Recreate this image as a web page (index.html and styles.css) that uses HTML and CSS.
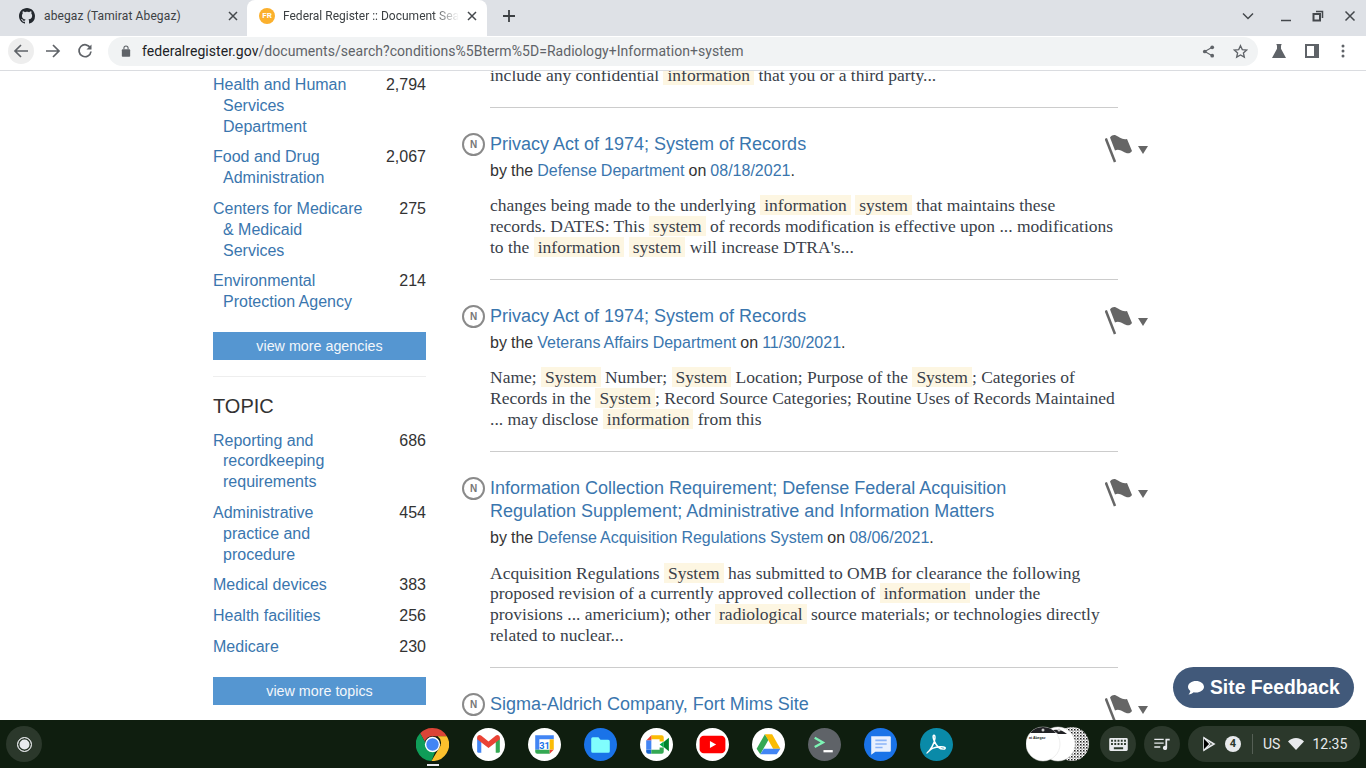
FILE: index.html

```html
<!DOCTYPE html>
<html lang="en">
<head>
    <meta charset="UTF-8">
    <title>Federal Register :: Document Search</title>
    <link rel="stylesheet" href="styles.css">
</head>
<body>

<div class="tabstrip">
    <div class="tab">
        <svg class="favicon" viewBox="0 0 16 16"><path fill="#24292f" d="M8 0C3.58 0 0 3.58 0 8c0 3.54 2.29 6.53 5.47 7.59.4.07.55-.17.55-.38 0-.19-.01-.82-.01-1.49-2.01.37-2.53-.49-2.69-.94-.09-.23-.48-.94-.82-1.13-.28-.15-.68-.52-.01-.53.63-.01 1.08.58 1.23.82.72 1.21 1.87.87 2.33.66.07-.52.28-.87.51-1.07-1.78-.2-3.64-.89-3.64-3.95 0-.87.31-1.59.82-2.15-.08-.2-.36-1.02.08-2.12 0 0 .67-.21 2.2.82.64-.18 1.32-.27 2-.27s1.36.09 2 .27c1.53-1.04 2.2-.82 2.2-.82.44 1.1.16 1.92.08 2.12.51.56.82 1.27.82 2.15 0 3.07-1.87 3.75-3.65 3.95.29.25.54.73.54 1.48 0 1.07-.01 1.93-.01 2.2 0 .21.15.46.55.38A8.01 8.01 0 0 0 16 8c0-4.42-3.58-8-8-8z"/></svg>
        <span class="tab-title tab-plain">abegaz (Tamirat Abegaz)</span>
        <svg class="tab-close" viewBox="0 0 10 10"><path d="M1 1l8 8M9 1l-8 8"/></svg>
    </div>
    <div class="tab tab-active">
        <span class="fr-icon">FR</span>
        <span class="tab-title tab-fade">Federal Register :: Document Search</span>
        <svg class="tab-close" viewBox="0 0 10 10"><path d="M1 1l8 8M9 1l-8 8"/></svg>
    </div>
    <svg class="new-tab" viewBox="0 0 12 12"><path d="M6 0v12M0 6h12"/></svg>
    <div class="window-btns">
        <svg class="win-chevron" viewBox="0 0 12 8"><path d="M1 1.5l5 5 5-5"/></svg>
        <svg class="win-min" viewBox="0 0 12 12"><path d="M1 10.500h10"/></svg>
        <svg class="win-restore" viewBox="0 0 12 12"><path d="M4 1.500h6.500V8"/><path d="M1.500 4h6.500v6.500H1.500z" stroke-width="2"/></svg>
        <svg class="win-close" viewBox="0 0 12 12"><path d="M1.5 1.5l9 9M10.5 1.5l-9 9"/></svg>
    </div>
</div>

<div class="toolbar">
    <div class="nav-btn nav-back">
        <svg viewBox="0 0 16 16"><path d="M15 8H2M8 2L2 8l6 6"/></svg>
    </div>
    <div class="nav-btn">
        <svg viewBox="0 0 16 16"><path d="M1 8h13M8 2l6 6-6 6"/></svg>
    </div>
    <div class="nav-btn">
        <svg viewBox="0 0 16 16"><path d="M13.4 5A6 6 0 1 0 14 8.5"/><path class="solid" d="M14.5 1.5v5h-5z"/></svg>
    </div>
    <div class="omnibox">
        <svg class="lock" viewBox="0 0 12 14"><path d="M2 5h8a1 1 0 0 1 1 1v7a1 1 0 0 1-1 1H2a1 1 0 0 1-1-1V6a1 1 0 0 1 1-1z"/><path d="M3.5 5V3.5a2.5 2.5 0 0 1 5 0V5" fill="none" stroke="#5f6368" stroke-width="1.3"/></svg>
        <span class="url"><span class="url-host">federalregister.gov</span>/documents/search?conditions%5Bterm%5D=Radiology+Information+system</span>
        <svg class="omni-share" viewBox="0 0 14 14"><path d="M11 2.5L3 7l8 4.5" fill="none" stroke="#5f6368" stroke-width="1.2"/><circle cx="11" cy="2.5" r="2"/><circle cx="3" cy="7" r="2"/><circle cx="11" cy="11.5" r="2"/></svg>
        <svg class="omni-star" viewBox="0 0 16 16"><path d="M8 1.8l1.9 4.2 4.6.5-3.4 3 1 4.5L8 11.7 3.9 14l1-4.5-3.4-3 4.6-.5z"/></svg>
    </div>
    <svg class="tool-flask" viewBox="0 0 16 16"><path d="M5.5 1h5v1.2H10v3.6L15 15H1L6 5.800V2.200h-.5z"/></svg>
    <svg class="tool-panel" viewBox="0 0 14 14"><path fill-rule="evenodd" d="M0 0h14v14H0zM2 2v10h7V2z"/></svg>
    <svg class="tool-dots" viewBox="0 0 4 14"><circle cx="2" cy="2" r="1.500"/><circle cx="2" cy="7" r="1.500"/><circle cx="2" cy="12" r="1.500"/></svg>
</div>

<div class="page">
    <aside class="sidebar">
        <ul class="facets">
            <li><a href="#">Health and Human Services Department</a><span>2,794</span></li>
            <li><a href="#">Food and Drug Administration</a><span>2,067</span></li>
            <li><a href="#">Centers for Medicare &amp; Medicaid Services</a><span>275</span></li>
            <li><a href="#">Environmental Protection Agency</a><span>214</span></li>
        </ul>
        <a class="view-more" href="#">view more agencies</a>
        <hr class="facet-rule">
        <h3>TOPIC</h3>
        <ul class="facets">
            <li><a href="#">Reporting and recordkeeping requirements</a><span>686</span></li>
            <li><a href="#">Administrative practice and procedure</a><span>454</span></li>
            <li><a href="#">Medical devices</a><span>383</span></li>
            <li><a href="#">Health facilities</a><span>256</span></li>
            <li><a href="#">Medicare</a><span>230</span></li>
        </ul>
        <a class="view-more" href="#">view more topics</a>
    </aside>

    <main class="results">
        <div class="result result-cut">
            <div class="result-body">
                <p>include any confidential <mark>information</mark> that you or a third party...</p>
            </div>
        </div>

        <div class="result">
            <span class="doc-type">N</span>
            <div class="result-body">
                <h4><a href="#">Privacy Act of 1974; System of Records</a></h4>
                <div class="byline">by the <a href="#">Defense Department</a> on <a href="#">08/18/2021</a>.</div>
                <p>changes being made to the underlying <mark>information</mark> <mark>system</mark> that maintains these<br>records. DATES: This <mark>system</mark> of records modification is effective upon ... modifications<br>to the <mark>information</mark> <mark>system</mark> will increase DTRA's...</p>
            </div>
            <div class="flag-menu">
                <svg viewBox="0 0 28 28"><path class="pole" d="M.8 3.500L10 27"/><path d="M5 2.500C7 0 9-.5 11 .5c3 1.500 6 4.500 11 3.500l5 12c-2 3-5 3-9 .5-3-1.500-5-2.500-8-1z"/></svg>
                <i class="caret"></i>
            </div>
        </div>

        <div class="result">
            <span class="doc-type">N</span>
            <div class="result-body">
                <h4><a href="#">Privacy Act of 1974; System of Records</a></h4>
                <div class="byline">by the <a href="#">Veterans Affairs Department</a> on <a href="#">11/30/2021</a>.</div>
                <p>Name; <mark>System</mark> Number; <mark>System</mark> Location; Purpose of the <mark>System</mark>; Categories of<br>Records in the <mark>System</mark>; Record Source Categories; Routine Uses of Records Maintained<br>... may disclose <mark>information</mark> from this</p>
            </div>
            <div class="flag-menu">
                <svg viewBox="0 0 28 28"><path class="pole" d="M.8 3.500L10 27"/><path d="M5 2.500C7 0 9-.5 11 .5c3 1.500 6 4.500 11 3.500l5 12c-2 3-5 3-9 .5-3-1.500-5-2.500-8-1z"/></svg>
                <i class="caret"></i>
            </div>
        </div>

        <div class="result">
            <span class="doc-type">N</span>
            <div class="result-body">
                <h4><a href="#">Information Collection Requirement; Defense Federal Acquisition Regulation Supplement; Administrative and Information Matters</a></h4>
                <div class="byline">by the <a href="#">Defense Acquisition Regulations System</a> on <a href="#">08/06/2021</a>.</div>
                <p>Acquisition Regulations <mark>System</mark> has submitted to OMB for clearance the following<br>proposed revision of a currently approved collection of <mark>information</mark> under the<br>provisions ... americium); other <mark>radiological</mark> source materials; or technologies directly<br>related to nuclear...</p>
            </div>
            <div class="flag-menu">
                <svg viewBox="0 0 28 28"><path class="pole" d="M.8 3.500L10 27"/><path d="M5 2.500C7 0 9-.5 11 .5c3 1.500 6 4.500 11 3.500l5 12c-2 3-5 3-9 .5-3-1.500-5-2.500-8-1z"/></svg>
                <i class="caret"></i>
            </div>
        </div>

        <div class="result">
            <span class="doc-type">N</span>
            <div class="result-body">
                <h4><a href="#">Sigma-Aldrich Company, Fort Mims Site</a></h4>
            </div>
            <div class="flag-menu">
                <svg viewBox="0 0 28 28"><path class="pole" d="M.8 3.500L10 27"/><path d="M5 2.500C7 0 9-.5 11 .5c3 1.500 6 4.500 11 3.500l5 12c-2 3-5 3-9 .5-3-1.500-5-2.500-8-1z"/></svg>
                <i class="caret"></i>
            </div>
        </div>
    </main>

    <a class="site-feedback" href="#">
        <svg viewBox="0 0 18 16"><path d="M9 1c4.400 0 8 2.600 8 5.800s-3.600 5.800-8 5.800c-.8 0-1.600-.1-2.300-.3C5.500 13.300 3.600 14.500 1.500 14.500c1-1 1.700-2.200 1.800-3.500C1.900 9.900 1 8.400 1 6.800 1 3.600 4.600 1 9 1z"/></svg>
        Site Feedback
    </a>
</div>

<div class="shelf">
    <div class="launcher"><i></i></div>

    <div class="apps">
        <div class="app app-active">
            <svg viewBox="0 0 32 32">
                <path fill="#db4437" d="M16 0a16 16 0 0 1 13.900 8H16a8 8 0 0 0-7.500 5.200L4 5.200A16 16 0 0 1 16 0z"/>
                <path fill="#0f9d58" d="M4 5.200l6.900 12A6 6 0 0 0 19 22l-4 10A16 16 0 0 1 4 5.200z"/>
                <path fill="#fbc02d" d="M29.900 8A16 16 0 0 1 15 32l7-12a8 8 0 0 0-1-12z"/>
                <circle cx="16" cy="16" r="7.400" fill="#fff"/>
                <circle cx="16" cy="16" r="6" fill="#4285f4"/>
            </svg>
        </div>
        <div class="app">
            <svg viewBox="0 0 32 32">
                <circle cx="16" cy="16" r="16" fill="#fff"/>
                <path fill="#4285f4" d="M5 10h4v14H6.500A1.500 1.500 0 0 1 5 22.500z"/>
                <path fill="#34a853" d="M23 10h4v12.500a1.500 1.500 0 0 1-1.500 1.500H23z"/>
                <path fill="#ea4335" d="M5 9c0-2 2.300-3 3.800-1.800L16 13l7.200-5.800C24.700 6 27 7 27 9v2l-11 8.500L5 11z"/>
            </svg>
        </div>
        <div class="app">
            <svg viewBox="0 0 32 32">
                <circle cx="16" cy="16" r="16" fill="#fff"/>
                <path fill="#4285f4" d="M7 7h18v4H11v10H7z"/>
                <path fill="#fbbc04" d="M21 11h4v10h-4z"/>
                <path fill="#34a853" d="M7 21h14v4H9a2 2 0 0 1-2-2z"/>
                <path fill="#ea4335" d="M21 21h4l-4 4z"/>
                <text x="16" y="20" class="cal-text">31</text>
            </svg>
        </div>
        <div class="app">
            <svg viewBox="0 0 32 32">
                <circle cx="16" cy="16" r="16" fill="#1a73e8"/>
                <path fill="#80fdfd" d="M7 10.500A1.500 1.500 0 0 1 8.500 9H14l2 2.500h7.500A1.500 1.500 0 0 1 25 13v9.500a1.500 1.500 0 0 1-1.500 1.500h-15A1.500 1.500 0 0 1 7 22.500z"/>
            </svg>
        </div>
        <div class="app">
            <svg viewBox="0 0 32 32">
                <circle cx="16" cy="16" r="16" fill="#fff"/>
                <path fill="#fbbc04" d="M11 7h10a2 2 0 0 1 2 2v4h-4v-2h-8z"/>
                <path fill="#ea4335" d="M11 7v5H6z"/>
                <path fill="#4285f4" d="M6 12h5v9H6z"/>
                <path fill="#1967d2" d="M6 21h5v4H8a2 2 0 0 1-2-2z"/>
                <path fill="#34a853" d="M11 21h8v-2h4v4a2 2 0 0 1-2 2H11z"/>
                <path fill="#00832d" d="M23 13.500l5-4v13l-5-4z"/>
                <path fill="#00ac47" d="M19 16l4-3v6z"/>
            </svg>
        </div>
        <div class="app">
            <svg viewBox="0 0 32 32">
                <circle cx="16" cy="16" r="16" fill="#fff"/>
                <rect x="3.500" y="7.500" width="25" height="17" rx="4" fill="#f00"/>
                <path fill="#fff" d="M13.500 12.500l6 3.500-6 3.500z"/>
            </svg>
        </div>
        <div class="app">
            <svg viewBox="0 0 32 32">
                <circle cx="16" cy="16" r="16" fill="#fff"/>
                <path fill="#34a853" d="M12.500 6l-8 14 3.500 5.500L16 11.500z"/>
                <path fill="#fbbc04" d="M12.500 6h7l8 14h-7z"/>
                <path fill="#4285f4" d="M11.500 20h16l-3.500 5.500H8z"/>
            </svg>
        </div>
        <div class="app">
            <svg viewBox="0 0 32 32">
                <circle cx="16" cy="16" r="16" fill="#5f6368"/>
                <path d="M6.500 9.500l8 4.500-8 4.500" fill="none" stroke="#7df5b5" stroke-width="2.200"/>
                <path d="M15 22.500h9" stroke="#fff" stroke-width="2.200"/>
            </svg>
        </div>
        <div class="app">
            <svg viewBox="0 0 32 32">
                <circle cx="16" cy="16" r="16" fill="#1a73e8"/>
                <path fill="#e8f0fe" d="M7 8h18a1 1 0 0 1 1 1v13a1 1 0 0 1-1 1H11l-4 3z"/>
                <path d="M11 12h11M11 15.500h11M11 19h7" stroke="#8ab4f8" stroke-width="1.500"/>
            </svg>
        </div>
        <div class="app">
            <svg viewBox="0 0 32 32">
                <circle cx="16" cy="16" r="16" fill="#0a8aa8"/>
                <path d="M7 24c3-2 7-9 7.500-14 .2-2-.2-3-1-3-1.200 0-1 3 .5 6 2 4.500 5 7.500 8.500 7.500 2 0 2.500-1 1.500-1.800-1.500-1-7-.8-12 1C9 22 7 23.500 7 24z" fill="none" stroke="#fff" stroke-width="1.400"/>
            </svg>
        </div>
    </div>

    <div class="tray">
        <div class="holding">
            <svg viewBox="0 0 64 36">
                <defs>
                    <pattern id="qr" width="3" height="3" patternUnits="userSpaceOnUse">
                        <rect width="3" height="3" fill="#fff"/>
                        <rect width="1.500" height="1.500" fill="#222"/>
                        <rect x="1.500" y="1.500" width="1" height="1" fill="#333"/>
                    </pattern>
                </defs>
                <circle cx="46" cy="18" r="17" fill="url(#qr)"/>
                <circle cx="32" cy="18" r="17" fill="#fff" stroke="#ddd" stroke-width=".5"/>
                <circle cx="17" cy="18" r="17" fill="#fff" stroke="#ddd" stroke-width=".5"/>
                <path fill="#202124" d="M4 7a17 17 0 0 1 26 0z"/>
                <path fill="#202124" d="M27 4a17 17 0 0 1 14 4l-9 0z"/>
                <circle cx="17" cy="4" r="1.500" fill="#ccc"/>
                <circle cx="33" cy="4" r="1.500" fill="#ccc"/>
                <text x="3" y="13" class="thumb-text">at Abegaz</text>
            </svg>
        </div>
        <div class="tray-btn">
            <svg class="icon-keys" viewBox="0 0 20 14"><path fill-rule="evenodd" fill="#e8eaed" d="M1.500 0h17A1.500 1.500 0 0 1 20 1.500v11a1.500 1.500 0 0 1-1.500 1.500h-17A1.500 1.500 0 0 1 0 12.500v-11A1.500 1.500 0 0 1 1.500 0zM2 2v2h2V2zm3.500 0v2h2V2zM9 2v2h2V2zm3.500 0v2h2V2zM16 2v2h2V2zM2 5.500v2h2v-2zm3.500 0v2h2v-2zm3.500 0v2h2v-2zm3.500 0v2h2v-2zm3.500 0v2h2v-2zM5 10v2h10v-2z"/></svg>
        </div>
        <div class="tray-btn">
            <svg class="icon-music" viewBox="0 0 18 14"><path stroke="#e8eaed" stroke-width="1.500" d="M0 1.500h11M0 6h11M0 10.500h7"/><path fill="#e8eaed" d="M13 1h5v2h-3v8.500a2.500 2.500 0 1 1-2-2.400z"/></svg>
        </div>
        <div class="status">
            <svg class="status-play" viewBox="0 0 14 16"><path fill="none" stroke="#e8eaed" stroke-width="1.600" d="M2 2l10 6-10 6z"/><path stroke="#e8eaed" stroke-width="1.200" d="M2 2l6 6-6 6"/></svg>
            <span class="badge">4</span>
            <span class="status-sep"></span>
            <span class="status-text">US</span>
            <svg class="status-wifi" viewBox="0 0 16 12"><path fill="#e8eaed" d="M8 12L0 3.500C2 1.300 4.900 0 8 0s6 1.300 8 3.500z"/></svg>
            <span class="status-text">12:35</span>
        </div>
    </div>
</div>

</body>
</html>
```

FILE: styles.css

```css
* {
    box-sizing: border-box;
}
html, body {
    margin: 0;
    height: 768px;
    overflow: hidden;
}
body {
    display: flex;
    flex-direction: column;
    font-family: "Liberation Sans", Arial, sans-serif;
    background-color: #fff;
    color: #333;
}
a {
    color: #3a76ae;
    text-decoration: none;
}

/* browser tabs */
.tabstrip {
    display: flex;
    align-items: center;
    height: 36px;
    flex: none;
    background-color: #dee1e6;
    font-family: Roboto, sans-serif;
    font-size: 12px;
    color: #3c4043;
}
.tab {
    display: flex;
    align-items: center;
    width: 240px;
    height: 36px;
    padding: 0 10px 4px 19px;
    margin-left: 8px;
    margin-right: -1px;
}
.tab + .tab {
    margin-left: 0;
    padding-left: 12px;
}
.tab-active {
    background-color: #fff;
    border-radius: 8px 8px 0 0;
}
.favicon {
    width: 16px;
    height: 16px;
    margin-left: -8px;
    flex: none;
}
.fr-icon {
    width: 16px;
    height: 16px;
    flex: none;
    border-radius: 50%;
    background-color: #fbb02d;
    color: #fff;
    font-size: 8px;
    font-weight: bold;
    line-height: 16px;
    text-align: center;
}
.tab-title {
    flex: 1;
    margin-left: 8px;
    overflow: hidden;
    white-space: nowrap;
}
.tab-plain {
    margin-left: 9px;
    letter-spacing: 0.12px;
}
.tab-fade {
    -webkit-mask-image: linear-gradient(to right, #000 85%, transparent 100%);
    mask-image: linear-gradient(to right, #000 85%, transparent 100%);
}
.tab-close {
    width: 10px;
    height: 10px;
    flex: none;
    margin-left: 8px;
    fill: none;
    stroke: #45494d;
    stroke-width: 1.5;
}
.new-tab {
    width: 12px;
    height: 12px;
    margin-left: 17px;
    margin-bottom: 4px;
    fill: none;
    stroke: #3c4043;
    stroke-width: 1.800;
}
.window-btns {
    display: flex;
    align-items: center;
    margin-left: auto;
    margin-bottom: 4px;
    fill: none;
    stroke: #44484c;
    stroke-width: 1.500;
}
.win-chevron {
    width: 12px;
    height: 8px;
    margin-right: 26px;
}
.win-min,
.win-restore,
.win-close {
    width: 12px;
    height: 12px;
    margin-right: 20px;
}
.win-close {
    margin-right: 10px;
}

/* browser toolbar */
.toolbar {
    display: flex;
    align-items: center;
    height: 35px;
    flex: none;
    padding: 0 0 4px 8px;
    background-color: #fff;
    border-bottom: 1px solid #dadce0;
}
.nav-btn {
    display: flex;
    align-items: center;
    justify-content: center;
    width: 26px;
    height: 26px;
    margin-right: 6px;
    border-radius: 50%;
}
.nav-btn svg {
    width: 16px;
    height: 16px;
    fill: none;
    stroke: #5f6368;
    stroke-width: 1.700;
}
.nav-btn .solid {
    fill: #5f6368;
    stroke: none;
}
.nav-back {
    background-color: #eeeeee;
}
.omnibox {
    display: flex;
    align-items: center;
    width: 1150px;
    height: 29px;
    margin-left: 4px;
    padding: 0 10px 0 13px;
    background-color: #f1f3f4;
    border-radius: 15px;
}
.lock {
    width: 10px;
    height: 12px;
    fill: #5f6368;
    flex: none;
}
.url {
    flex: 1;
    margin-left: 11px;
    font-family: Roboto, sans-serif;
    font-size: 14px;
    letter-spacing: 0.05px;
    color: #5f6368;
    white-space: nowrap;
}
.url-host {
    color: #202124;
}
.omni-share {
    width: 13px;
    height: 13px;
    margin-right: 18px;
    fill: #5f6368;
}
.omni-star {
    width: 15px;
    height: 15px;
    fill: none;
    stroke: #5f6368;
    stroke-width: 1.400;
}
.tool-flask {
    width: 16px;
    height: 16px;
    margin-left: 13px;
    fill: #5f6368;
}
.tool-panel {
    width: 14px;
    height: 14px;
    margin-left: 18px;
    fill: #5f6368;
}
.tool-dots {
    width: 4px;
    height: 14px;
    margin-left: 22px;
    fill: #5f6368;
}

/* page */
.page {
    position: relative;
    display: flex;
    flex: 1;
    min-height: 0;
    overflow: hidden;
    padding-left: 213px;
    font-size: 16px;
    line-height: 20.8px;
}
.sidebar {
    width: 213px;
    flex: none;
    margin-right: 36px;
    padding-top: 4px;
}
.facets {
    list-style: none;
    margin: 0;
    padding: 0;
}
.facets li {
    display: flex;
    justify-content: space-between;
    margin-bottom: 10px;
}
.facets a {
    display: block;
    width: 152px;
    padding-left: 10px;
    text-indent: -10px;
}
.view-more {
    display: block;
    height: 28px;
    margin-top: 19px;
    background-color: #5596d1;
    color: #f3f7fb;
    font-size: 14.300px;
    line-height: 28px;
    text-align: center;
}
.facet-rule {
    height: 1px;
    margin: 16px 0 0;
    border: 0;
    background-color: #eeeeee;
}
.sidebar h3 {
    margin: 16px 0 11.600px;
    font-size: 20px;
    font-weight: normal;
    line-height: 26px;
    color: #333;
}

/* search results */
.results {
    margin-top: -6.400px;
    flex: none;
    width: 690px;
}
.result {
    position: relative;
    display: flex;
    padding-left: 28px;
}
.result-body {
    width: 628px;
    padding: 25px 0 21.400px;
    border-bottom: 1px solid #ccc;
}
.result-cut .result-body {
    padding-top: 0;
    padding-bottom: 21.600px;
}
.result h4 {
    margin: 0 60px 4.400px 0;
    font-size: 18px;
    font-weight: normal;
    line-height: 23.400px;
}
.byline {
    color: #333;
    word-spacing: -0.4px;
}
.result p {
    margin: 13.600px 0 0;
    font-family: "Liberation Serif", "Times New Roman", serif;
    font-size: 17.500px;
    line-height: 20.800px;
    color: #3a3f4a;
}
.result-cut p {
    margin-top: 0;
}
mark {
    padding: 0 4px;
    background-color: #fdf6e2;
    color: #3a3f4a;
}
.doc-type {
    position: absolute;
    left: 0;
    top: 25px;
    width: 23px;
    height: 23px;
    border: 2px solid #8a8a8a;
    border-radius: 50%;
    color: #777;
    font-size: 10px;
    font-weight: bold;
    line-height: 19px;
    text-align: center;
}
.flag-menu {
    position: absolute;
    left: 643px;
    top: 27px;
    display: flex;
    align-items: center;
}
.flag-menu svg {
    width: 28px;
    height: 28px;
    fill: #666;
}
.flag-menu .pole {
    fill: none;
    stroke: #666;
    stroke-width: 2.500;
}
.caret {
    width: 0;
    height: 0;
    margin-left: 5px;
    margin-top: 2px;
    border-left: 5px solid transparent;
    border-right: 5px solid transparent;
    border-top: 8px solid #666;
}
.site-feedback {
    position: absolute;
    left: 1173px;
    top: 596px;
    display: flex;
    align-items: center;
    width: 181px;
    height: 41px;
    padding: 1px 0 0 14px;
    border-radius: 21px;
    background-color: #41597a;
    color: #fff;
    font-size: 19.300px;
    font-weight: bold;
}
.site-feedback svg {
    width: 18px;
    height: 16px;
    margin-right: 5px;
    fill: #fff;
}

/* chromeos shelf */
.shelf {
    position: relative;
    display: flex;
    align-items: center;
    height: 48px;
    flex: none;
    padding: 0 6px;
    background-color: #0f1e0f;
    font-family: Roboto, sans-serif;
    color: #e8eaed;
}
.launcher {
    display: flex;
    align-items: center;
    justify-content: center;
    width: 36px;
    height: 36px;
    border-radius: 50%;
    background-color: #2b382b;
}
.launcher i {
    width: 15px;
    height: 15px;
    border-radius: 50%;
    border: 1px solid #e8eaed;
    background-color: #e8eaed;
    box-shadow: inset 0 0 0 1.500px #2b382b;
}
.apps {
    display: flex;
    gap: 23px;
    margin-left: 374px;
}
.app {
    position: relative;
    width: 33px;
    height: 33px;
}
.app svg {
    display: block;
    width: 33px;
    height: 33px;
}
.app-active::after {
    content: "";
    position: absolute;
    left: 11px;
    top: 36px;
    width: 12px;
    height: 2px;
    background-color: #e8eaed;
}
.cal-text {
    font-family: Roboto, sans-serif;
    font-size: 9px;
    font-weight: bold;
    fill: #1a73e8;
    text-anchor: middle;
}
.tray {
    display: flex;
    align-items: center;
    margin-left: auto;
}
.holding {
    width: 64px;
    height: 36px;
    margin-right: 10px;
}
.holding svg {
    display: block;
    width: 64px;
    height: 36px;
}
.thumb-text {
    font-family: "Liberation Sans", sans-serif;
    font-size: 3.500px;
    font-weight: bold;
    fill: #222;
}
.tray-btn {
    display: flex;
    align-items: center;
    justify-content: center;
    width: 36px;
    height: 36px;
    margin-right: 8px;
    border-radius: 50%;
    background-color: #2b382b;
}
.icon-keys {
    width: 19px;
    height: 13px;
}
.icon-music {
    width: 16px;
    height: 12px;
}
.status {
    display: flex;
    align-items: center;
    width: 172px;
    height: 36px;
    padding-left: 14px;
    border-radius: 18px;
    background-color: #2b382b;
    font-size: 14px;
}
.status-play {
    width: 14px;
    height: 16px;
}
.badge {
    width: 16px;
    height: 16px;
    margin-left: 9px;
    border-radius: 50%;
    background-color: #e8eaed;
    color: #2b382b;
    font-size: 11px;
    font-weight: bold;
    line-height: 16px;
    text-align: center;
}
.status-sep {
    width: 1px;
    height: 20px;
    margin: 0 10px 0 11px;
    background-color: #555f55;
}
.status-wifi {
    width: 16px;
    height: 12px;
    margin: 0 8px 0 8px;
}
```
